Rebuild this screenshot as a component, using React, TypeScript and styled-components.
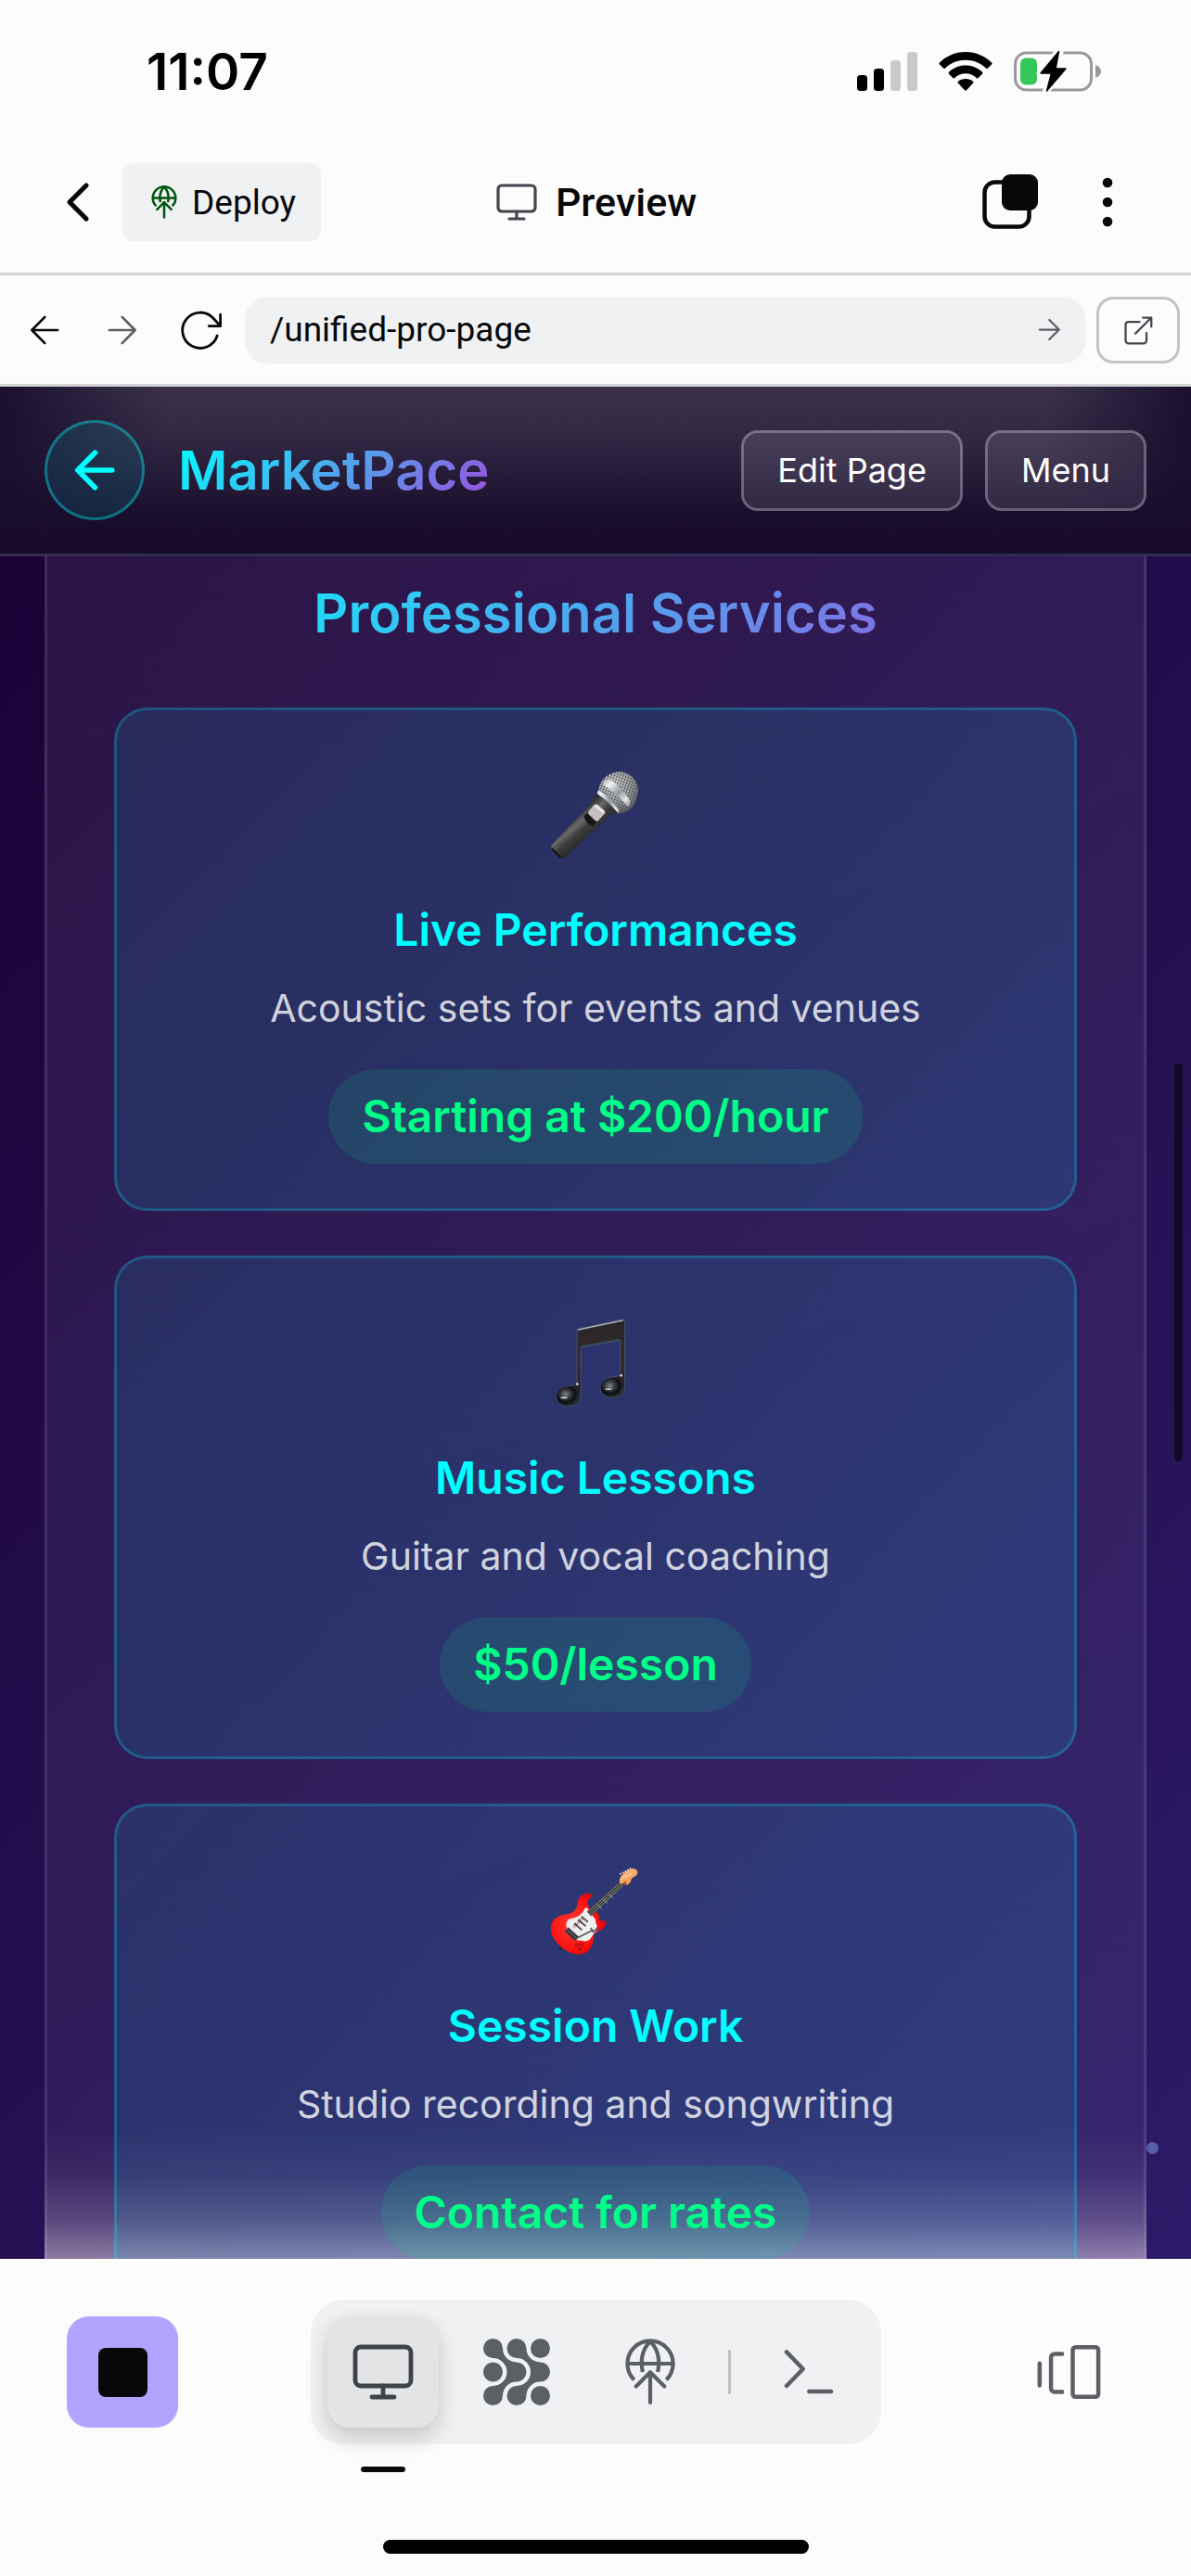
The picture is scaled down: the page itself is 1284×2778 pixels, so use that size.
import React from "react";
import styled, { createGlobalStyle, css } from "styled-components";

const ui = `Inter, "Noto Sans", sans-serif`;
const chrome = `Roboto, "Noto Sans", sans-serif`;
const ink = "#07080a";
const gradientText = css`
  background: linear-gradient(135deg, #00ffff, #9d4edd);
  -webkit-background-clip: text;
  background-clip: text;
  color: transparent;
`;

const GlobalStyle = createGlobalStyle`
  *, *::before, *::after { box-sizing: border-box; }
  body { margin: 0; background: #fcfcfc; font-family: ${ui}; }
  h1, h2, h3, p { margin: 0; }
  button, input { font: inherit; color: inherit; }
  button { border: 0; padding: 0; background: none; cursor: pointer; }
  svg { display: block; flex: none; }
`;

/* ---------- shell ---------- */

const Screen = styled.div`
  display: flex;
  flex-direction: column;
  height: 100vh;
  background: #fcfcfc;
  color: ${ink};
`;

const StatusBar = styled.div`
  display: flex;
  align-items: center;
  justify-content: space-between;
  height: 142px;
  padding: 12px 97px 0 158px;
`;

const Clock = styled.time`
  font-size: 55px;
  font-weight: 600;
  line-height: 60px;
  color: #000;
`;

const Indicators = styled.div`
  display: flex;
  align-items: center;
  gap: 23px;
`;

const TopBar = styled.header`
  display: grid;
  grid-template-columns: 1fr auto 1fr;
  align-items: center;
  height: 155px;
  padding: 0 60px;
  border-bottom: 3px solid #d3d5d7;
  font-family: ${chrome};
`;

const BarSide = styled.div<{ $end?: boolean }>`
  display: flex;
  align-items: center;
  gap: ${(p) => (p.$end ? 45 : 24)}px;
  justify-content: ${(p) => (p.$end ? "flex-end" : "flex-start")};
`;

const IconButton = styled.button<{ $size: number; $muted?: boolean }>`
  display: flex;
  align-items: center;
  justify-content: center;
  flex: none;
  width: ${(p) => p.$size}px;
  height: ${(p) => p.$size}px;
  color: ${(p) => (p.$muted ? "#5c5f66" : ink)};
`;

const DeployButton = styled.button`
  display: flex;
  align-items: center;
  gap: 12px;
  height: 84px;
  padding: 0 27px;
  border-radius: 12px;
  background: #f0f1f3;
  font-size: 37px;
  svg {
    color: #00560f;
  }
`;

const BarTitle = styled.h1`
  display: flex;
  align-items: center;
  gap: 18px;
  font-size: 43px;
  font-weight: 500;
  svg {
    color: #42454c;
  }
`;

const AddressBar = styled.form`
  display: flex;
  align-items: center;
  gap: 12px;
  height: 120px;
  padding: 0 12px;
  border-bottom: 3px solid #d3d5d7;
  font-family: ${chrome};
`;

const AddressField = styled.div`
  display: flex;
  align-items: center;
  flex: 1;
  height: 72px;
  padding: 0 21px 0 27px;
  border-radius: 24px;
  background: #f0f1f3;
`;

const AddressInput = styled.input`
  flex: 1;
  min-width: 0;
  border: 0;
  padding: 0;
  outline: 0;
  background: none;
  font-size: 37px;
`;

const OpenButton = styled.button`
  display: flex;
  align-items: center;
  justify-content: center;
  width: 90px;
  height: 72px;
  border: 3px solid #c0c4c6;
  border-radius: 18px;
  color: #42454c;
`;

/* ---------- previewed page ---------- */

const Viewport = styled.main`
  position: relative;
  display: flex;
  flex-direction: column;
  flex: 1;
  min-height: 0;
  overflow: hidden;
  background: linear-gradient(135deg, #1a0033, #2d1b69);
  color: #fff;
`;

const SiteHeader = styled.header`
  position: relative;
  display: flex;
  align-items: center;
  gap: 36px;
  flex: none;
  padding: 36px 48px;
  border-bottom: 3px solid #312d54;
  background: linear-gradient(180deg, #1b112f, #1a102f 50%, #180b28);
  &::before {
    content: "";
    position: absolute;
    inset: 0;
    background: linear-gradient(180deg, rgba(255, 250, 240, 0.145), rgba(255, 250, 240, 0.1) 30%, transparent 80%);
    mask-image: linear-gradient(90deg, transparent, #000 14%, #000 88%, transparent);
  }
  > * {
    position: relative;
  }
`;

const RoundButton = styled.button`
  display: flex;
  align-items: center;
  justify-content: center;
  width: 108px;
  height: 108px;
  border: 3px solid rgba(0, 255, 255, 0.35);
  border-radius: 50%;
  background: rgba(0, 255, 255, 0.1);
  color: #0ff;
`;

const Brand = styled.h2`
  ${gradientText}
  font-size: 58px;
  font-weight: 600;
  line-height: 72px;
`;

const HeaderActions = styled.div`
  display: flex;
  gap: 24px;
  margin-left: auto;
`;

const OutlineButton = styled.button`
  padding: 18px 36px;
  border: 3px solid rgba(255, 255, 255, 0.34);
  border-radius: 18px;
  background: rgba(255, 255, 255, 0.1);
  background-clip: padding-box;
  font-size: 36px;
  line-height: 45px;
`;

const Panel = styled.section`
  flex: 1;
  min-height: 0;
  margin: 0 48px;
  padding: 25px 72px 0;
  overflow: hidden;
  border: solid rgba(255, 255, 255, 0.1);
  border-width: 0 3px;
  background:
    linear-gradient(0deg, rgba(255, 240, 250, 0.44), rgba(255, 235, 250, 0.2) 42px, rgba(255, 230, 250, 0.06) 90px, transparent 140px),
    linear-gradient(160deg, rgba(255, 255, 255, 0.07), rgba(255, 255, 255, 0.05));
`;

const SectionTitle = styled.h2`
  ${gradientText}
  margin-bottom: 66px;
  font-size: 58px;
  font-weight: 600;
  line-height: 72px;
  text-align: center;
`;

const ServiceList = styled.div`
  display: grid;
  gap: 48px;
`;

const ServiceCard = styled.article`
  display: flex;
  flex-direction: column;
  align-items: center;
  padding: 48px;
  border: 3px solid rgba(0, 240, 255, 0.22);
  border-radius: 36px;
  background: linear-gradient(135deg, rgba(0, 240, 255, 0.1), rgba(10, 220, 255, 0.13)) border-box;
  text-align: center;
`;

const Emoji = styled.div`
  display: flex;
  align-items: center;
  height: 129px;
  margin-bottom: 30px;
`;

const ServiceName = styled.h3`
  margin-bottom: 24px;
  color: #0ff;
  font-size: 48px;
  font-weight: 600;
  line-height: 60px;
`;

const ServiceText = styled.p`
  margin-bottom: 36px;
  color: rgba(255, 255, 255, 0.8);
  font-size: 41px;
  line-height: 60px;
`;

const Price = styled.p`
  padding: 24px 36px;
  border-radius: 60px;
  background: rgba(0, 255, 136, 0.11);
  color: #00ff88;
  font-size: 48px;
  font-weight: 600;
  line-height: 54px;
`;

const ScrollThumb = styled.div`
  position: absolute;
  top: 730px;
  right: 9px;
  width: 9px;
  height: 429px;
  border-radius: 5px;
  background: #120828;
`;

const Particle = styled.span`
  position: absolute;
  right: 35px;
  bottom: 113px;
  width: 13px;
  height: 13px;
  border-radius: 50%;
  background: #5660a8;
`;

/* ---------- bottom bar ---------- */

const BottomBar = styled.footer`
  display: flex;
  flex-direction: column;
  align-items: center;
  justify-content: space-between;
  height: 342px;
  padding: 44px 72px 24px;
`;

const Tools = styled.nav`
  display: flex;
  align-items: center;
  justify-content: space-between;
  width: 100%;
`;

const StopButton = styled.button`
  display: flex;
  align-items: center;
  justify-content: center;
  width: 120px;
  height: 120px;
  border-radius: 24px;
  background: #b2a3ff;
  &::before {
    content: "";
    width: 53px;
    height: 53px;
    border-radius: 8px;
    background: ${ink};
  }
`;

const TabGroup = styled.div`
  display: flex;
  align-items: center;
  gap: 24px;
  padding: 18px;
  border-radius: 36px;
  background: #f0f1f3;
`;

const Tab = styled.button<{ $active?: boolean }>`
  position: relative;
  display: flex;
  align-items: center;
  justify-content: center;
  width: 120px;
  height: 120px;
  border-radius: 24px;
  color: #5c5f66;
  ${(p) =>
    p.$active &&
    css`
      background: #e3e4e6;
      color: #3f4249;
      box-shadow: 0 12px 24px rgba(0, 0, 0, 0.16), 0 0 12px rgba(0, 0, 0, 0.04);
      &::after {
        content: "";
        position: absolute;
        bottom: -48px;
        left: 36px;
        width: 48px;
        height: 6px;
        border-radius: 3px;
        background: ${ink};
      }
    `}
`;

const Divider = styled.span`
  width: 3px;
  height: 48px;
  background: #bfc1c4;
`;

const HomeIndicator = styled.div`
  width: 459px;
  height: 15px;
  border-radius: 8px;
  background: #000;
`;

/* ---------- icons ---------- */

type IconProps = { size: number; stroke?: number; children?: React.ReactNode };

const Icon = ({ size, stroke = 1.6, children }: IconProps) => (
  <svg
    width={size}
    height={size}
    viewBox="0 0 24 24"
    fill="none"
    stroke="currentColor"
    strokeWidth={stroke}
    strokeLinecap="round"
    strokeLinejoin="round"
    aria-hidden="true"
  >
    {children}
  </svg>
);

const ArrowLeft = (p: IconProps) => (
  <Icon {...p}>
    <path d="M21.4 12H2.9M12.2 2.6 2.9 12l9.3 9.4" />
  </Icon>
);
const ArrowRight = (p: IconProps) => (
  <Icon {...p}>
    <path d="M2.6 12h18.5M11.8 2.6 21.1 12l-9.3 9.4" />
  </Icon>
);
const Monitor = (p: IconProps) => (
  <Icon {...p}>
    <rect x="2" y="3" width="20" height="14" rx="2" />
    <path d="M12 17v4M8 21h8" />
  </Icon>
);
const GlobeUp = (p: IconProps) => (
  <Icon {...p}>
    <g strokeLinecap="butt">
      <path d="M6.2 14.8A8.2 8.2 0 1 1 17.8 14.8" />
      <path d="M3.8 9h16.4" />
      <path d="M9.3 12C8.5 8.2 9 4 12 1c3 3 3.5 7.200 2.700 11" />
    </g>
    <path d="M12 23V12M6.900 17.200 12 12.100l5.100 5.100" />
  </Icon>
);

const Signal = () => (
  <svg width="65" height="42" viewBox="0 0 65 42" aria-hidden="true">
    <rect x="0" y="25" width="11" height="17" rx="3.500" />
    <rect x="18" y="18" width="11" height="24" rx="3.500" />
    <rect x="36" y="9" width="11" height="33" rx="3.500" fill="#c9c9c9" />
    <rect x="54" y="0" width="11" height="42" rx="3.500" fill="#c9c9c9" />
  </svg>
);

const Wifi = () => (
  <svg width="58" height="42" viewBox="0 0 58 42" aria-hidden="true">
    <path d="M29 0C40 0 50 4.500 57 11.500q1 1 0 2l-4 4q-1 1-2 0C45 12 37.500 8.800 29 8.800S13 12 7 17.500q-1 1-2 0l-4-4q-1-1 0-2C8 4.500 18 0 29 0z" />
    <path d="M29 14.500c7 0 13.300 2.700 18 7.200q1 1 0 2l-4.300 4.200q-1 1-2 0c-3-2.900-7.200-4.700-11.700-4.700s-8.700 1.800-11.700 4.700q-1 1-2 0L11 23.700q-1-1 0-2c4.700-4.500 11-7.200 18-7.200z" />
    <path d="M29 29c3 0 5.800 1 8 2.800q1 1 0 2L30 41.300q-1 1-2 0l-7-7.500q-1-1 0-2C23.200 30 26 29 29 29z" />
  </svg>
);

const Battery = () => (
  <svg width="94" height="46" viewBox="0 0 94 46" aria-hidden="true">
    <rect x="1.500" y="3" width="82" height="40" rx="12" fill="none" stroke="#999" strokeWidth="3" />
    <path d="M88 16c4 1.500 6 4 6 7s-2 5.500-6 7z" fill="#999" />
    <rect x="7" y="8.500" width="18" height="29" rx="6" fill="#34c759" />
    <path
      d="M48 1 28 25.500h11L34.500 44.500 57 19.500H46.500L50 2z"
      stroke="#fcfcfc"
      strokeWidth="7"
      strokeLinejoin="round"
    />
    <path d="M48.500 1.500 29 25h11.500L35.500 44 56 20H45z" stroke="#000" strokeWidth="1.500" strokeLinejoin="round" />
  </svg>
);

const MicArt = () => (
  <svg width="96" height="96" viewBox="162 93 288 288" role="img" aria-label="Microphone">
    <defs>
      <linearGradient id="micBody" x1="235" y1="240" x2="290" y2="305" gradientUnits="userSpaceOnUse">
        <stop offset="0" stopColor="#2b2b2b" />
        <stop offset=".35" stopColor="#6a6a6a" />
        <stop offset=".6" stopColor="#3d3d3d" />
        <stop offset="1" stopColor="#2a2a2a" />
      </linearGradient>
      <radialGradient id="micHead" cx=".4" cy=".3" r=".75">
        <stop offset="0" stopColor="#e2e4e6" />
        <stop offset=".6" stopColor="#a3a5a7" />
        <stop offset="1" stopColor="#5e5f61" />
      </radialGradient>
      <linearGradient id="micBand" x1="330" y1="125" x2="420" y2="215" gradientUnits="userSpaceOnUse">
        <stop offset="0" stopColor="#b0b2b5" />
        <stop offset=".2" stopColor="#f2f4f6" />
        <stop offset=".5" stopColor="#94979c" />
        <stop offset=".75" stopColor="#e6e9ec" />
        <stop offset="1" stopColor="#77797c" />
      </linearGradient>
      <pattern id="mesh" width="9" height="9" patternUnits="userSpaceOnUse" patternTransform="rotate(20)">
        <circle cx="4.500" cy="4.500" r="2.700" fill="#303133" />
      </pattern>
    </defs>
    <path d="M308 162Q302 190 280 212L164 334q-4 9 0 15l24 25q8 7 19 1L346 243q18-14 34-13z" fill="url(#micBody)" />
    <path d="m164 340 34 36-9 0-26-29z" fill="#111" />
    <path d="M315 158q32 10 65 74 44-2 58-45 16-41-12-72-31-29-72-11-32 14-39 54z" fill="url(#micHead)" />
    <path d="M315 158q32 10 65 74 44-2 58-45 16-41-12-72-31-29-72-11-32 14-39 54z" fill="url(#mesh)" />
    <path d="M332 128q15-11 26-3 28 19 60 65 4 14-8 20-30-40-77-70-5-5-1-12z" fill="url(#micBand)" />
    <path d="M315 156q33 17 67 65l-2 11q-32-39-69-65z" fill="url(#micBand)" />
    <path d="m268 240 14-12 31 27-17 18q-22-8-28-33z" fill="#151515" />
    <path d="m283 226 18-22q6-5 13 0l20 17q6 5 1 12l-20 22q-5 4-10 0l-21-20q-4-4-1-9z" fill="#c4bfc1" />
    <path d="m300 208 9-4 26 21-4 6z" fill="#eeeaeb" />
  </svg>
);

const NotesArt = () => (
  <svg width="96" height="96" viewBox="162 96 288 288" role="img" aria-label="Musical notes">
    <defs>
      <linearGradient id="beam" x1="0" y1="0" x2="0" y2="1">
        <stop offset="0" stopColor="#2a2527" />
        <stop offset=".55" stopColor="#352a2b" />
        <stop offset="1" stopColor="#161518" />
      </linearGradient>
      <radialGradient id="noteHead" cx=".4" cy=".4" r=".65">
        <stop offset="0" stopColor="#7d868d" />
        <stop offset=".3" stopColor="#3c4248" />
        <stop offset=".65" stopColor="#0c0c10" />
        <stop offset="1" stopColor="#2d3c42" />
      </radialGradient>
    </defs>
    <g stroke="#50687a" strokeWidth="2">
      <path d="M246 130 392 99q9-1 9 6v210q0 35-40 37-38 0-39-32 1-27 38-35 22-2 26-10V166L258 189v157q-1 32-40 34-39-1-39-33 2-26 38-33 25-1 29-10z" fill="url(#beam)" />
    </g>
    <ellipse cx="217" cy="347" rx="37" ry="31" fill="url(#noteHead)" />
    <ellipse cx="360" cy="319" rx="37" ry="31" fill="url(#noteHead)" />
    <path d="m250 132 144-30" stroke="#a9b4bd" strokeWidth="4" strokeLinecap="round" />
    <path d="m260 186 124-23" stroke="#35525f" strokeWidth="5" opacity=".7" />
    <g fill="#dfe7ec">
      <ellipse cx="204" cy="352" rx="12" ry="2.500" />
      <ellipse cx="348" cy="324" rx="12" ry="2.500" />
      <circle cx="247" cy="308" r="4" />
      <circle cx="389" cy="280" r="4" />
    </g>
  </svg>
);

const GuitarArt = () => (
  <svg width="96" height="96" viewBox="162 99 288 288" role="img" aria-label="Electric guitar">
    <defs>
      <radialGradient id="guitarBody" cx=".4" cy=".5" r=".62">
        <stop offset="0" stopColor="#ff3b36" />
        <stop offset=".7" stopColor="#fb100f" />
        <stop offset="1" stopColor="#cf0508" />
      </radialGradient>
      <linearGradient id="headstock" x1="0" y1="0" x2="1" y2="1">
        <stop offset="0" stopColor="#ffc98a" />
        <stop offset="1" stopColor="#ee8a3a" />
      </linearGradient>
    </defs>
    <path d="m190 358 8-2v10l-7-1z" fill="#222" />
    <path
      d="M250 207q8-20 30-21 18 1 16 10-20 10-15 26 7 18 27 24 11 5 9 14 0 15 8 16 14-7 16 4-2 17-24 27-18 7-17 20-1 30-19 46-23 17-54 5-40-15-62-58-10-31 7-50 15-14 46-18 29-5 32-45z"
      fill="url(#guitarBody)"
    />
    <path d="M273 232q8-3 11 10l22 28q-1 10 5 22 2 18-12 25-12 26-30 23-14-2-24-3l-31-36q-8-22 6-32 40-4 53-37z" fill="#f0eeee" />
    <path d="m206 308 12-13 35 32-13 13z" fill="#3a3a3c" />
    <path d="m214 302 32 30" stroke="#a8a8aa" strokeWidth="3" strokeDasharray="3 3" />
    <path d="m234 296 32-31" stroke="#cbb0ae" strokeWidth="10" />
    <path d="m238 283 24 21m-12-33 24 20m-13-30 20 17" stroke="#1e1e1e" strokeWidth="6" strokeDasharray="5 2" />
    <path d="m285 252 106-97" stroke="#333" strokeWidth="20" />
    <path d="m280 247 106-97m-101 102 106-97m-101 102 105-97" stroke="#c8c8c8" strokeWidth="2" />
    <path d="m313 222 14 14m4-32 14 14m4-30 13 13" stroke="#ddd" strokeWidth="2" />
    <path d="m251 328 48-24m-9-7 10 14 13-15" stroke="#5c5658" strokeWidth="5" fill="none" />
    <path d="M384 138q12-22 34-31 16-6 24 6 2 14-12 20-9 4-9 11-3 10-13 15-11-9-20-3-6-8-4-18z" fill="url(#headstock)" />
    <path d="m385 124 36-20m-27 31 37-16" stroke="#e7d9cf" strokeWidth="5" strokeDasharray="5 4" />
    <path d="m393 153 12-9 2 14z" fill="#b85c1c" />
    <g fill="none" stroke="#a30a0c" strokeWidth="3">
      <circle cx="246" cy="354" r="6" />
      <circle cx="262" cy="351" r="6" />
    </g>
    <circle cx="256" cy="366" r="4" fill="#4a1c1c" />
  </svg>
);

const services = [
  { art: <MicArt />, name: "Live Performances", text: "Acoustic sets for events and venues", price: "Starting at $200/hour" },
  { art: <NotesArt />, name: "Music Lessons", text: "Guitar and vocal coaching", price: "$50/lesson" },
  { art: <GuitarArt />, name: "Session Work", text: "Studio recording and songwriting", price: "Contact for rates" },
];

export default function App() {
  return (
    <Screen>
      <GlobalStyle />
      <StatusBar>
        <Clock>11:07</Clock>
        <Indicators>
          <Signal />
          <Wifi />
          <Battery />
        </Indicators>
      </StatusBar>

      <TopBar>
        <BarSide>
          <IconButton $size={48} aria-label="Back">
            <Icon size={48} stroke={2.6}>
              <path d="m16.500 3-9 9 9 9" />
            </Icon>
          </IconButton>
          <DeployButton>
            <GlobeUp size={36} stroke={1.7} />
            Deploy
          </DeployButton>
        </BarSide>
        <BarTitle>
          <Monitor size={48} stroke={1.6} />
          Preview
        </BarTitle>
        <BarSide $end>
          <IconButton $size={60} aria-label="Windows">
            <svg width="60" height="60" viewBox="0 0 60 60" aria-hidden="true">
              <rect x="2.500" y="8.500" width="48" height="48" rx="11" fill="none" stroke="currentColor" strokeWidth="4.500" />
              <rect x="21" y="0" width="39" height="39" rx="9" fill="currentColor" />
            </svg>
          </IconButton>
          <IconButton $size={60} aria-label="More">
            <svg width="12" height="54" viewBox="0 0 12 54" fill="currentColor" aria-hidden="true">
              <circle cx="6" cy="6" r="5.300" />
              <circle cx="6" cy="27" r="5.300" />
              <circle cx="6" cy="48" r="5.300" />
            </svg>
          </IconButton>
        </BarSide>
      </TopBar>

      <AddressBar onSubmit={(e) => e.preventDefault()}>
        <IconButton type="button" $size={72} aria-label="Go back">
          <ArrowLeft size={36} stroke={1.8} />
        </IconButton>
        <IconButton type="button" $size={72} $muted aria-label="Go forward">
          <ArrowRight size={36} stroke={1.8} />
        </IconButton>
        <IconButton type="button" $size={72} aria-label="Reload">
          <Icon size={48} stroke={1.4}>
            <path d="M22.800 9.800 19 5.600A9.600 9.600 0 1 0 21.100 15M22.800 3.600v6.200h-6.200" />
          </Icon>
        </IconButton>
        <AddressField>
          <AddressInput aria-label="Page path" defaultValue="/unified-pro-page" />
          <IconButton $size={36} $muted aria-label="Go">
            <ArrowRight size={27} stroke={2} />
          </IconButton>
        </AddressField>
        <OpenButton type="button" aria-label="Open in new tab">
          <Icon size={36} stroke={1.5}>
            <path d="M13 6H5a2 2 0 0 0-2 2v11.500a2 2 0 0 0 2 2h11a2 2 0 0 0 2-2V14M10 14.500 21.500 3M15.500 3h6v6.500" />
          </Icon>
        </OpenButton>
      </AddressBar>

      <Viewport>
        <SiteHeader>
          <RoundButton aria-label="Back to MarketPace">
            <ArrowLeft size={48} stroke={2.800} />
          </RoundButton>
          <Brand>MarketPace</Brand>
          <HeaderActions>
            <OutlineButton>Edit Page</OutlineButton>
            <OutlineButton>Menu</OutlineButton>
          </HeaderActions>
        </SiteHeader>
        <Panel>
          <SectionTitle>Professional Services</SectionTitle>
          <ServiceList>
            {services.map((s) => (
              <ServiceCard key={s.name}>
                <Emoji>{s.art}</Emoji>
                <ServiceName>{s.name}</ServiceName>
                <ServiceText>{s.text}</ServiceText>
                <Price>{s.price}</Price>
              </ServiceCard>
            ))}
          </ServiceList>
        </Panel>
        <Particle />
        <ScrollThumb />
      </Viewport>

      <BottomBar>
        <Tools aria-label="Workspace">
          <StopButton aria-label="Stop" />
          <TabGroup>
            <Tab $active aria-label="Preview">
              <Monitor size={72} stroke={1.6} />
            </Tab>
            <Tab aria-label="Agent">
              <svg width="72" height="72" viewBox="0 0 24 24" fill="currentColor" aria-hidden="true">
                <path d="M7 3.500a5 5 0 0 0 5 5a3.500 3.500 0 0 1 0 7a5 5 0 0 0-5 5a3.500 3.500 0 1 1-3.500-3.500a5 5 0 0 0 0-10a3.500 3.500 0 1 1 3.500-3.500z" />
                <path d="M15.500 3.500a5 5 0 0 0 5 5a3.500 3.500 0 0 1 0 7a5 5 0 0 0-5 5a3.500 3.500 0 1 1-3.500-3.500a5 5 0 0 0 0-10a3.500 3.500 0 1 1 3.500-3.500z" />
                <circle cx="20.500" cy="3.500" r="3.500" />
                <circle cx="3.500" cy="12" r="3.500" />
                <circle cx="20.500" cy="20.500" r="3.500" />
              </svg>
            </Tab>
            <Tab aria-label="Deployments">
              <GlobeUp size={72} stroke={1.400} />
            </Tab>
            <Divider />
            <Tab aria-label="Shell">
              <Icon size={72} stroke={1.500}>
                <path d="m4 4.800 5.900 6.100L4 17M12.100 19h7.900" />
              </Icon>
            </Tab>
          </TabGroup>
          <IconButton $size={120} $muted aria-label="Switch tabs">
            <Icon size={72} stroke={1.500}>
              <path d="M1.600 8.900v7.900M9.700 5.500H7a1.300 1.300 0 0 0-1.300 1.300v11.100A1.300 1.300 0 0 0 7 19.200h2.700" />
              <rect x="13.500" y="3.100" width="9.200" height="17.800" rx="1" />
            </Icon>
          </IconButton>
        </Tools>
        <HomeIndicator />
      </BottomBar>
    </Screen>
  );
}
